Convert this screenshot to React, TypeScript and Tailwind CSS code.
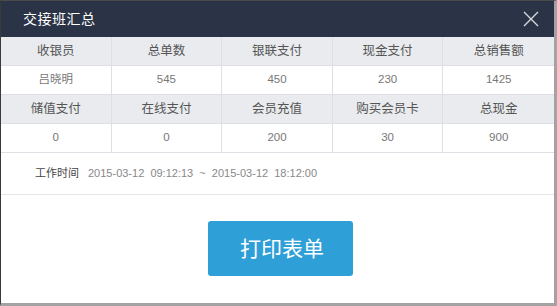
const rows = [
  {
    head: ['收银员', '总单数', '银联支付', '现金支付', '总销售额'],
    vals: ['吕晓明', '545', '450', '230', '1425'],
  },
  {
    head: ['储值支付', '在线支付', '会员充值', '购买会员卡', '总现金'],
    vals: ['0', '0', '200', '30', '900'],
  },
]

const font = { fontFamily: '"Liberation Sans", "Noto Sans CJK SC", sans-serif' }

export default function App() {
  return (
    <div
      className="flex h-[306px] w-[557px] flex-col border-t border-l border-r-[3px] border-b-[3px] border-t-[#4a4a4a] border-l-[#3a3a3a] border-r-[#a3a3a3] border-b-[#a3a3a3] bg-white"
      style={font}
    >
      <div className="flex h-[36px] shrink-0 items-center justify-between bg-[#2b3446] pl-[22px] pr-[15px]">
        <span className="text-[14px] tracking-[0.5px] text-white">交接班汇总</span>
        <svg width="16" height="16" viewBox="0 0 16 16" className="text-[#d6d9de]">
          <path d="M1 1L15 15M15 1L1 15" stroke="currentColor" strokeWidth="1.4" fill="none" />
        </svg>
      </div>

      <div className="shrink-0">
        {rows.map((r, i) => (
          <div key={i}>
            <div className="grid grid-cols-5 bg-[#e9ebee]">
              {r.head.map((h, j) => (
                <div
                  key={j}
                  className={`flex h-[29px] items-center justify-center border-b border-[#dcdfe3] text-[12.5px] text-[#555] ${j < 4 ? 'border-r' : ''}`}
                >
                  {h}
                </div>
              ))}
            </div>
            <div className="grid grid-cols-5 bg-white">
              {r.vals.map((v, j) => (
                <div
                  key={j}
                  className={`flex h-[29px] items-center justify-center border-b border-[#dcdfe3] text-[11.5px] text-[#777] ${j < 4 ? 'border-r' : ''}`}
                >
                  {v}
                </div>
              ))}
            </div>
          </div>
        ))}
      </div>

      <div className="flex h-[42px] shrink-0 items-center border-b border-[#e3e5e8] pl-[34px] text-[11px]">
        <span className="text-[#444]">工作时间</span>
        <span className="ml-[9px] whitespace-pre text-[#888]">2015-03-12  09:12:13  ~  2015-03-12  18:12:00</span>
      </div>

      <div className="flex flex-1 items-start justify-center pt-[26px]">
        <button className="ml-[5px] flex h-[55px] w-[145px] items-center justify-center rounded-[3px] bg-[#2f9fd8] pl-[4px] text-[21px] text-white">
          打印表单
        </button>
      </div>
    </div>
  )
}
